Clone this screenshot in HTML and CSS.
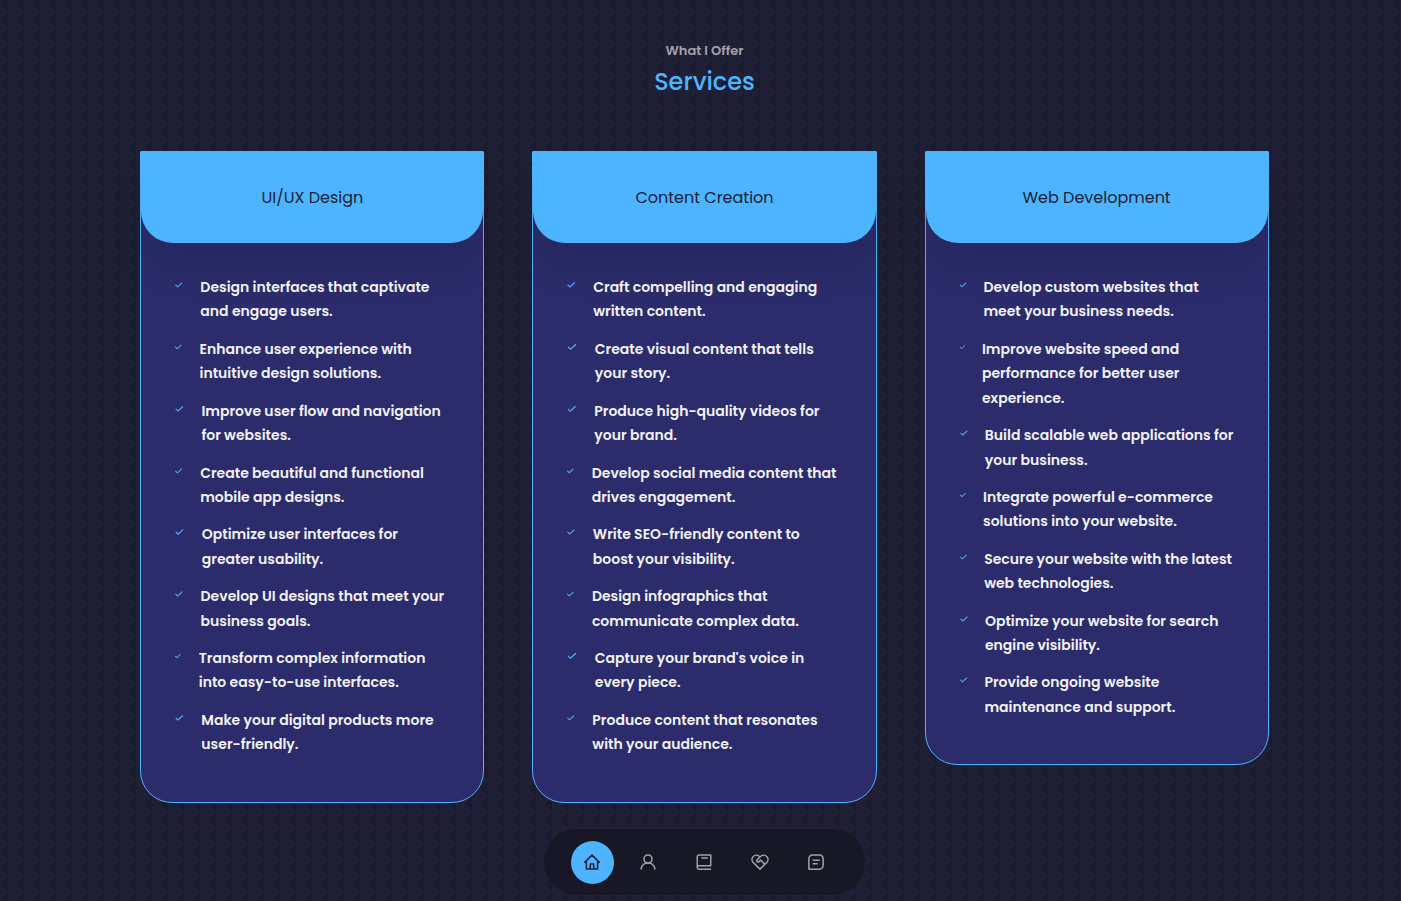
FILE: index.html
```html
<!DOCTYPE html>
<html lang="en">
<head>
<meta charset="utf-8">
<meta name="viewport" content="width=device-width, initial-scale=1">
<title>Services</title>
<link rel="stylesheet" href="styles.css">
</head>
<body>
<svg class="sprite" aria-hidden="true">
  <symbol id="check" viewBox="0 0 24 24"><path d="m10 14.600-3.800-3.600-1.600 1.600 5.400 5 10.500-9.800-1.500-1.700z"/></symbol>
</svg>
<main class="services" id="services">
  <h5 class="eyebrow">What I Offer</h5>
  <h2 class="title">Services</h2>
  <div class="cards">
    <article class="card">
      <header class="card-head"><h3>UI/UX Design</h3></header>
      <ul class="list">
        <li><svg class="tick"><use href="#check"/></svg><p>Design interfaces that captivate and engage users.</p></li>
        <li><svg class="tick"><use href="#check"/></svg><p>Enhance user experience with intuitive design solutions.</p></li>
        <li><svg class="tick"><use href="#check"/></svg><p>Improve user flow and navigation for websites.</p></li>
        <li><svg class="tick"><use href="#check"/></svg><p>Create beautiful and functional mobile app designs.</p></li>
        <li><svg class="tick"><use href="#check"/></svg><p>Optimize user interfaces for greater usability.</p></li>
        <li><svg class="tick"><use href="#check"/></svg><p>Develop UI designs that meet your business goals.</p></li>
        <li><svg class="tick"><use href="#check"/></svg><p>Transform complex information into easy-to-use interfaces.</p></li>
        <li><svg class="tick"><use href="#check"/></svg><p>Make your digital products more user-friendly.</p></li>
      </ul>
    </article>
    <article class="card">
      <header class="card-head"><h3>Content Creation</h3></header>
      <ul class="list">
        <li><svg class="tick"><use href="#check"/></svg><p>Craft compelling and engaging written content.</p></li>
        <li><svg class="tick"><use href="#check"/></svg><p>Create visual content that tells your story.</p></li>
        <li><svg class="tick"><use href="#check"/></svg><p>Produce high-quality videos for your brand.</p></li>
        <li><svg class="tick"><use href="#check"/></svg><p>Develop social media content that drives engagement.</p></li>
        <li><svg class="tick"><use href="#check"/></svg><p>Write SEO-friendly content to boost&nbsp;your visibility.</p></li>
        <li><svg class="tick"><use href="#check"/></svg><p>Design infographics that communicate complex data.</p></li>
        <li><svg class="tick"><use href="#check"/></svg><p>Capture your brand's voice in every piece.</p></li>
        <li><svg class="tick"><use href="#check"/></svg><p>Produce content that resonates with your audience.</p></li>
      </ul>
    </article>
    <article class="card">
      <header class="card-head"><h3>Web Development</h3></header>
      <ul class="list">
        <li><svg class="tick"><use href="#check"/></svg><p>Develop custom websites that meet your business needs.</p></li>
        <li><svg class="tick"><use href="#check"/></svg><p>Improve website speed and performance for better user experience.</p></li>
        <li><svg class="tick"><use href="#check"/></svg><p>Build scalable web applications for your business.</p></li>
        <li><svg class="tick"><use href="#check"/></svg><p>Integrate powerful e-commerce solutions into your website.</p></li>
        <li><svg class="tick"><use href="#check"/></svg><p>Secure your website with the latest web technologies.</p></li>
        <li><svg class="tick"><use href="#check"/></svg><p>Optimize your website for search engine visibility.</p></li>
        <li><svg class="tick"><use href="#check"/></svg><p>Provide ongoing website maintenance and support.</p></li>
      </ul>
    </article>
  </div>
</main>
<nav class="nav" aria-label="Sections">
  <a class="active" href="#home" aria-label="Home"><svg viewBox="0 0 24 24"><path d="M1.800 12.800 12 2.800l10.200 10M4.500 10.800v10.400h15V10.800M9.700 21v-6.300h4.600V21"/></svg></a>
  <a href="#about" aria-label="About"><svg viewBox="0 0 24 24"><circle cx="12" cy="8" r="5.400"/><path d="M2.800 22c.3-5 4-8.600 9.200-8.600s8.900 3.600 9.200 8.600"/></svg></a>
  <a href="#experience" aria-label="Experience"><svg viewBox="0 0 24 24"><path d="M21.500 21.500H5.300A2.300 2.300 0 0 1 3 19.200V5a2.500 2.500 0 0 1 2.500-2.500H21V17H5.300a2.250 2.250 0 0 0 0 4.500M8.500 6.700H17"/></svg></a>
  <a href="#services" aria-label="Services"><svg viewBox="0 0 24 24"><path d="M12 21.500 3 12.700a5.700 5.700 0 0 1 0-8 5.800 5.800 0 0 1 8-.3l1 .9 1-.9a5.800 5.800 0 0 1 8 .3 5.700 5.700 0 0 1 0 8zM12 5.300 8.200 9.100a1.700 1.700 0 0 0 2.500 2.400l2-2 5.300 5.200"/></svg></a>
  <a href="#contact" aria-label="Contact"><svg viewBox="0 0 24 24"><path d="M2.500 21.500V7.500a5 5 0 0 1 5-5h9a5 5 0 0 1 5 5v9a5 5 0 0 1-5 5zM7.500 9.700h9.500M7.500 14.300h6.500"/></svg></a>
</nav>
</body>
</html>
```
FILE: styles.css
```css
* { box-sizing: border-box; margin: 0; padding: 0; }

body {
  min-height: 100vh;
  padding-left: 8px;
  font-family: Poppins, Inter, sans-serif;
  color: #fff;
  background-color: #1f1f36;
  background-image:
    linear-gradient(90deg, transparent 8px, #1f1f36 8px),
    conic-gradient(from 45deg at 0 50%, #1b1b2f 90deg, transparent 0);
  background-size: 16px 16px;
  background-position: 0 -4px;
}

.sprite { display: none; }

.services { width: 81%; margin: 0 auto; padding: 40px 0 96px; }

.eyebrow, .title { text-align: center; font-weight: 500; }
.eyebrow { font-size: 13px; font-weight: 600; line-height: 21px; color: #a3a3ac; }
.title { margin-top: 3px; font-size: 24px; line-height: 36px; color: #4db5ff; }

.cards {
  display: grid;
  grid-template-columns: repeat(3, 1fr);
  align-items: start;
  gap: 48px;
  margin-top: 51px;
}

.card {
  border: 1px solid #4db5ff;
  border-radius: 1px 1px 32px 32px;
  background: #2c2c6c;
}

.card-head {
  padding: 32px;
  border-radius: 0 0 32px 32px;
  background: #4db5ff;
  box-shadow: 0 32px 32px rgba(0, 0, 0, .1);
}
.card-head h3 {
  font-size: 16px;
  font-weight: 400;
  line-height: 27px;
  text-align: center;
  color: #1f1f38;
}

.list { padding: 32px; list-style: none; }
.list li { display: flex; gap: 16px; margin-bottom: 13px; }
.list p { font-size: 14px; font-weight: 600; line-height: 1.745; color: #f2f2f2; }
.tick { width: 16px; height: 16px; margin-top: 2px; fill: #4db5ff; }

.nav {
  position: fixed;
  left: 8px;
  right: 0;
  bottom: 6px;
  display: flex;
  gap: 13px;
  width: max-content;
  margin: 0 auto;
  padding: 12px 27px 11px;
  border-radius: 48px;
  background: #171726;
}
.nav a {
  width: 43px;
  height: 43px;
  padding: 12px;
  border-radius: 50%;
  color: #a3a3aa;
}
.nav .active { background: #4db5ff; color: #1f1f38; }
.nav svg { display: block; width: 18px; height: 18px; fill: none; stroke: currentColor; stroke-width: 2; stroke-linejoin: round; }
```
